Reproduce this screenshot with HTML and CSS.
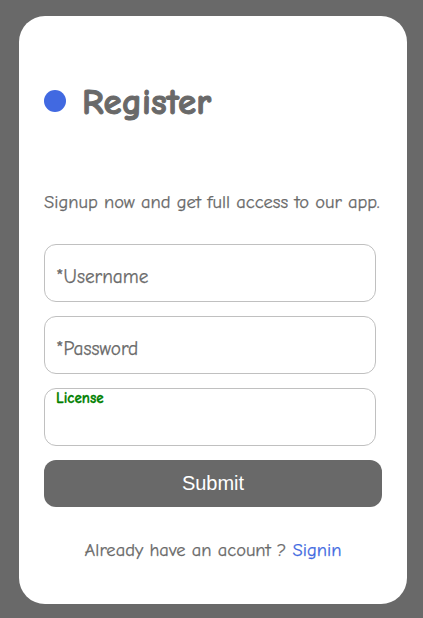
FILE: index.html
```html
<!DOCTYPE html>
<html>
<head>
<meta charset="utf-8">
<link rel="stylesheet" href="styles.css">
</head>
<body>
<div class="card">
  <div class="title-row">
    <span class="dot"></span>
    <h1 class="title">Register</h1>
  </div>
  <p class="subtitle">Signup now and get full access to our app.</p>
  <form class="form">
    <input class="field" type="text" placeholder="*Username">
    <input class="field" type="password" placeholder="*Password">
    <label class="field license">
      <span class="license-label">License</span>
    </label>
    <button class="submit" type="button">Submit</button>
  </form>
  <p class="signin">Already have an acount ? <a class="signin-link" href="#">Signin</a></p>
</div>
</body>
</html>
```
FILE: styles.css
```css
html, body {
  margin: 0;
  height: 100%;
}
body {
  background: #696969;
  padding: 16px 16px 14px 19px;
  box-sizing: border-box;
  font-family: "Comic Sans MS", "Comic Neue", cursive;
}
.card {
  background: #fff;
  border-radius: 26px;
  height: 588px;
  box-sizing: border-box;
  padding: 69px 25px 0 25px;
  display: flex;
  flex-direction: column;
}
.title-row {
  display: flex;
  align-items: center;
  gap: 16px;
  height: 32px;
}
.dot {
  width: 22px;
  height: 22px;
  border-radius: 50%;
  background: #4169e1;
  flex: none;
}
.title {
  margin: 0;
  font-size: 37px;
  font-weight: bold;
  color: #696969;
  line-height: 32px;
  -webkit-text-stroke: 1px #696969;
  padding-top: 2px;
}
.subtitle {
  margin: 73px 0 0 0;
  font-size: 18.5px;
  color: #696969;
  line-height: 24px;
  white-space: nowrap;
  -webkit-text-stroke: 0.25px #696969;
}
.form {
  display: flex;
  flex-direction: column;
  gap: 14px;
  margin-top: 30px;
}
.field {
  width: 332px;
  height: 58px;
  box-sizing: border-box;
  border: 1px solid #c0c0c0;
  border-radius: 12px;
  padding: 8px 11px 0 11px;
  font-family: inherit;
  font-size: 19.3px;
  color: #696969;
  outline: none;
  display: block;
  margin: 0;
  -webkit-text-stroke: 0.25px #696969;
}
.field::placeholder {
  color: #696969;
}
.license {
  position: relative;
}
.license-label {
  position: absolute;
  left: 11px;
  top: 0px;
  font-size: 15px;
  font-weight: bold;
  color: #008000;
  -webkit-text-stroke: 0.3px #008000;
}
.submit {
  width: 338px;
  height: 47px;
  border: none;
  border-radius: 12px;
  background: #696969;
  color: #fff;
  font-family: "Liberation Sans", Arial, sans-serif;
  font-size: 20px;
  margin: 0;
  -webkit-text-stroke: 0;
}
.signin {
  margin: 33px 0 0 0;
  text-align: center;
  font-size: 18.5px;
  color: #696969;
  line-height: 20px;
  -webkit-text-stroke: 0.25px #696969;
}
.signin-link {
  color: #4169e1;
  text-decoration: none;
  -webkit-text-stroke: 0.25px #4169e1;
}
```
